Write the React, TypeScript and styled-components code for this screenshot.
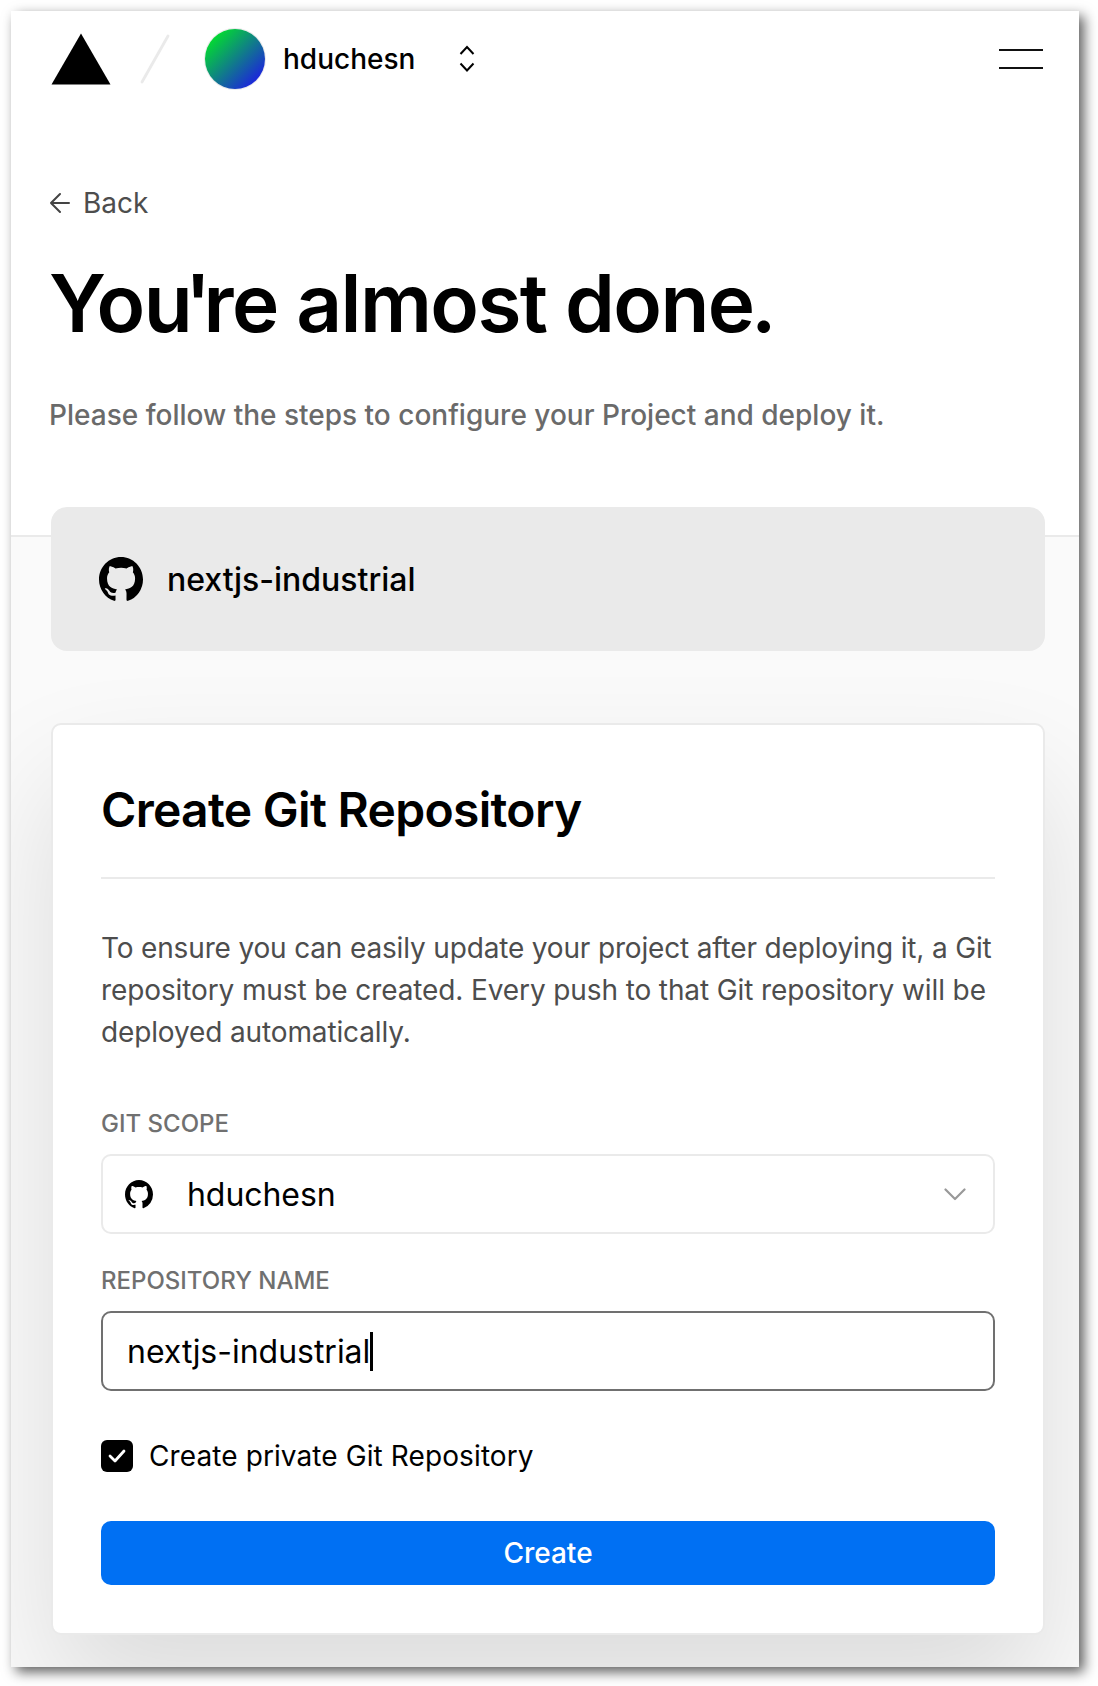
import React, { useState } from "react";
import styled, { createGlobalStyle } from "styled-components";

const GlobalStyle = createGlobalStyle`
  * { box-sizing: border-box; }
  html, body { margin: 0; background: #fff; }
  body { font-family: Inter, "Liberation Sans", sans-serif; color: #000; }
  h1, h2, p { margin: 0; }
`;

const Page = styled.div`
  height: 1686px;
  padding: 11px 19px 19px 11px;
  overflow: hidden;
`;

const Frame = styled.div`
  height: 1656px;
  background: #fafafa;
  overflow: hidden;
  box-shadow: 5px 5px 12px rgba(0, 0, 0, 0.63);
`;

const Header = styled.header`
  height: 96px;
  padding: 0 36px 0 40px;
  display: flex;
  align-items: center;
  background: #fff;
`;

const Icon = styled.svg`
  display: block;
  flex: none;
`;

const Slash = styled(Icon)`
  margin: 0 34px 0 29px;
`;

const Avatar = styled.div`
  width: 60px;
  height: 60px;
  flex: none;
  border-radius: 50%;
  background: linear-gradient(135deg, #00f01c 5%, #1f10f0 95%);
  box-shadow: 0 0 0 1px #eaeaea;
`;

const TeamName = styled.span`
  margin-left: 18px;
  font-size: 28px;
  font-weight: 500;
`;

const Switcher = styled(Icon)`
  margin-left: 44px;
`;

const Burger = styled.div`
  margin-left: auto;
  width: 44px;
  height: 20px;
  border: solid #111;
  border-width: 2px 0;
`;

const Hero = styled.section`
  height: 430px;
  padding: 75px 40px 0 38px;
  background: #fff;
  border-bottom: 2px solid #eaeaea;
`;

const BackLink = styled.a`
  display: flex;
  align-items: center;
  gap: 13px;
  height: 42px;
  padding-left: 1px;
  font-size: 28px;
  line-height: 42px;
  color: #4d4d4d;
`;

const Title = styled.h1`
  margin-top: 31px;
  font-size: 80px;
  line-height: 96px;
  font-weight: 600;
  letter-spacing: -0.02em;
`;

const Tracked = styled.span<{ $spacing: number }>`
  letter-spacing: ${(p) => p.$spacing}px;
`;

const Subtitle = styled.p`
  margin-top: 43px;
  font-size: 28px;
  line-height: 42px;
  font-weight: 500;
  color: #6a6a6a;
`;

const Content = styled.main`
  display: flex;
  flex-direction: column;
  gap: 72px;
  margin-top: -30px;
  padding: 0 34px 0 40px;
`;

const RepoBanner = styled.div`
  position: relative;
  height: 144px;
  padding: 0 48px;
  display: flex;
  align-items: center;
  gap: 24px;
  border-radius: 16px;
  background: #eaeaea;
  font-size: 32px;
  font-weight: 500;
`;

const Card = styled.section`
  height: 912px;
  padding: 55px 48px 0;
  border: 2px solid #eaeaea;
  border-radius: 10px;
  background: #fff;
  background-clip: padding-box;
  box-shadow: 0 60px 120px rgba(0, 0, 0, 0.12);
`;

const CardTitle = styled.h2`
  height: 99px;
  border-bottom: 2px solid #eaeaea;
  font-size: 48px;
  line-height: 60px;
  font-weight: 600;
  letter-spacing: -0.7px;
`;

const Description = styled.p`
  margin-top: 48px;
  font-size: 28px;
  line-height: 42px;
  color: #4d4d4d;
`;

const Field = styled.div<{ $gap: number }>`
  margin-top: ${(p) => p.$gap}px;
`;

const Label = styled.span`
  display: block;
  margin-bottom: 12px;
  font-size: 24px;
  line-height: 36px;
  font-weight: 450;
  color: #707070;
  text-transform: uppercase;
`;

const Control = styled.div<{ $focused?: boolean }>`
  height: 80px;
  padding: 0 27px 0 ${(p) => (p.$focused ? 24 : 22)}px;
  display: flex;
  align-items: center;
  border: 2px solid ${(p) => (p.$focused ? "#707070" : "#eaeaea")};
  border-radius: 10px;
  font-size: 32px;
  letter-spacing: ${(p) => (p.$focused ? -0.02 : -0.07)}px;
`;

const ScopeName = styled.span`
  margin-left: 34px;
  flex: 1;
`;

const Caret = styled.i`
  width: 3px;
  height: 39px;
  background: #000;
`;

const CheckRow = styled.div`
  margin-top: 44px;
  height: 42px;
  display: flex;
  align-items: center;
  gap: 16px;
  font-size: 28px;
  line-height: 42px;
  letter-spacing: 0.1px;
`;

const Checkbox = styled.span`
  display: grid;
  place-items: center;
  width: 32px;
  height: 32px;
  border-radius: 6px;
  background: #000;
`;

const Submit = styled.button`
  display: block;
  width: 100%;
  height: 64px;
  margin-top: 44px;
  padding: 0;
  border: 0;
  border-radius: 10px;
  background: #0070f3;
  color: #fff;
  font: 500 28px/64px Inter, "Liberation Sans", sans-serif;
`;

function GithubMark({ size }: { size: number }) {
  return (
    <Icon width={size} height={size + 1} viewBox="0 0 16 16" preserveAspectRatio="none" fill="#000">
      <path
        fillRule="evenodd"
        d="M8 0C3.58 0 0 3.58 0 8c0 3.54 2.29 6.53 5.47 7.59.4.07.55-.17.55-.38 0-.19-.01-.82-.01-1.49-2.01.37-2.53-.49-2.69-.94-.09-.23-.48-.94-.82-1.13-.28-.15-.68-.52-.01-.53.63-.01 1.08.58 1.23.82.72 1.21 1.87.87 2.33.66.07-.52.28-.87.51-1.07-1.78-.2-3.64-.89-3.64-3.95 0-.87.31-1.59.82-2.15-.08-.2-.36-1.02.08-2.12 0 0 .67-.21 2.2.82.64-.18 1.32-.27 2-.27s1.36.09 2 .27c1.53-1.04 2.2-.82 2.2-.82.44 1.1.16 1.92.08 2.12.51.56.82 1.27.82 2.15 0 3.07-1.87 3.75-3.65 3.95.29.25.54.73.54 1.48 0 1.07-.01 1.93-.01 2.2 0 .21.15.46.55.38A8.01 8.01 0 0 0 16 8c0-4.42-3.58-8-8-8z"
      />
    </Icon>
  );
}

export default function App() {
  const [repoName] = useState("nextjs-industrial");

  return (
    <Page>
      <GlobalStyle />
      <Frame>
        <Header>
          <Icon width="60" height="52" viewBox="0 0 60 52">
            <path d="M30 0.5L59.5 51.5H0.5z" />
          </Icon>
          <Slash width="31" height="50" viewBox="0 0 31 50" fill="none" stroke="#eaeaea" strokeWidth="2.8" strokeLinecap="round">
            <path d="M2 48L28 2" />
          </Slash>
          <Avatar />
          <TeamName>hduchesn</TeamName>
          <Switcher width="16" height="28" viewBox="0 0 16 28" fill="none" stroke="#000" strokeWidth="2">
            <path d="M1.5 9L8 2L14.5 9M1.5 18.500L8 25.500L14.5 18.500" />
          </Switcher>
          <Burger />
        </Header>

        <Hero>
          <BackLink>
            <Icon width="20" height="22" viewBox="0 0 20 22" fill="none" stroke="#444" strokeWidth="2" strokeLinecap="round" strokeLinejoin="round">
              <path d="M19 11H1M10 2L1 11L10 20" />
            </Icon>
            Back
          </BackLink>
          <Title>
            Yo<Tracked $spacing={-7.6}>u</Tracked><Tracked $spacing={-7.6}>'</Tracked>re almost don<Tracked $spacing={-4}>e</Tracked>.
          </Title>
          <Subtitle>Please follow the steps to configure your Project and deploy it.</Subtitle>
        </Hero>

        <Content>
          <RepoBanner>
            <GithubMark size={44} />
            nextjs-industrial
          </RepoBanner>

          <Card>
            <CardTitle>Create Git Repository</CardTitle>
            <Description>
              <Tracked $spacing={-0.16}>To ensure you can easily update your project after deploying it, a Git </Tracked>
              <Tracked $spacing={-0.11}>repository must be created. Every push to that Git repository will be </Tracked>
              <Tracked $spacing={-0.13}>deployed automatically.</Tracked>
            </Description>
            <Field $gap={53}>
              <Label>Git Scope</Label>
              <Control>
                <GithubMark size={28} />
                <ScopeName>hduchesn</ScopeName>
                <Icon width="22" height="13" viewBox="0 0 22 13" fill="none" stroke="#999" strokeWidth="2.2" strokeLinecap="round" strokeLinejoin="round">
                  <path d="M1.500 1.500L11 11L20.500 1.500" />
                </Icon>
              </Control>
            </Field>
            <Field $gap={29}>
              <Label>Repository Name</Label>
              <Control $focused>
                {repoName}
                <Caret />
              </Control>
            </Field>
            <CheckRow>
              <Checkbox>
                <Icon width="18" height="14" viewBox="0 0 18 14" fill="none" stroke="#fff" strokeWidth="2.8" strokeLinecap="round" strokeLinejoin="round">
                  <path d="M2 7L7 12L16 2" />
                </Icon>
              </Checkbox>
              Create private Git Repository
            </CheckRow>
            <Submit>Create</Submit>
          </Card>
        </Content>
      </Frame>
    </Page>
  );
}
